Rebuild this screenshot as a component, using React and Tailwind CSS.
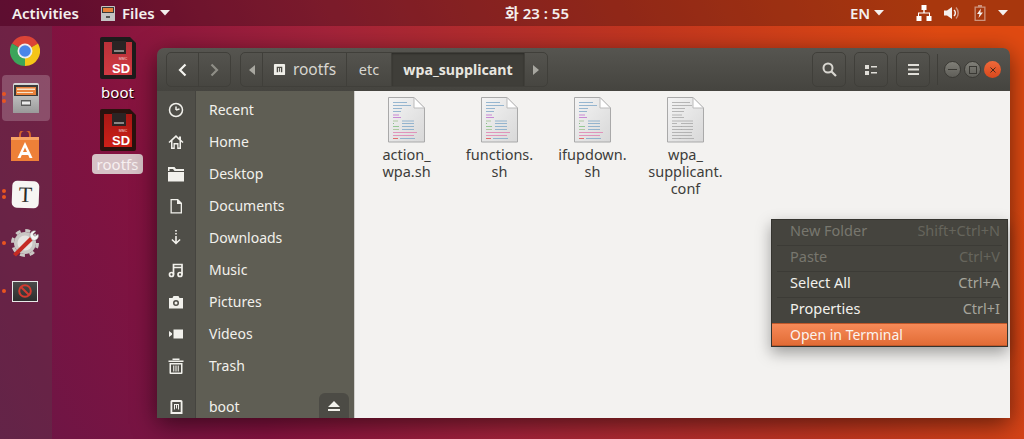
const FONT = "font-['Noto_Sans','Noto_Sans_CJK_KR',sans-serif]";

const Caret = ({ className = "" }) => (
  <svg width="10" height="6" viewBox="0 0 10 6" className={className}>
    <path d="M0 0h10L5 5.500z" fill="currentColor" />
  </svg>
);

const SdCard = ({ body, top, edge, id }) => (
  <svg width="36" height="42" viewBox="0 0 36 42">
    <defs>
      <linearGradient id={id} x1="0" y1="0" x2="0" y2="1">
        <stop offset="0" stopColor={top} />
        <stop offset="1" stopColor={body} />
      </linearGradient>
    </defs>
    <path d="M2 0h28l6 6v34a2 2 0 0 1-2 2H2a2 2 0 0 1-2-2V2a2 2 0 0 1 2-2z" fill={edge} />
    <path d="M4 5h28v33H4z" fill={`url(#${id})`} />
    <path d="M12 4h14v13H12z" fill="#2b2424" />
    <path d="M14 13h10v2H14z" fill="#8b8684" />
    <text x="23" y="23" textAnchor="middle" fontSize="3.500" fill="#f3dcdc" fontFamily="Liberation Sans">MMC</text>
    <text x="21" y="36" textAnchor="middle" fontSize="13" fontWeight="700" fill="#fff" fontFamily="Liberation Sans">SD</text>
  </svg>
);

const sideIcons = {
  recent: (
    <g fill="none" stroke="currentColor" strokeWidth="1.500">
      <circle cx="8" cy="8" r="6.500" />
      <path d="M8 8V4.500M8 8l3.500-1" />
    </g>
  ),
  home: (
    <path
      d="M8 1 .500 8l1 1L3 7.700V15h3.800v-4.500h2.400V15H13V7.700L14.500 9l1-1-2.500-2.300V2.500h-2v1.400zM4.500 6.500 8 3.200l3.500 3.300v7H10.500V9h-5v4.500h-1z"
      fill="currentColor"
      fillRule="evenodd"
    />
  ),
  desktop: (
    <g fill="currentColor">
      <path d="M0 1h6.500L8 3h8v2H6.500L5 3H1.500v2H0z" />
      <path d="M0 6h16v9.500H0z" />
    </g>
  ),
  documents: <path d="M2.500 1H10l4 4v10.500H2.500zM3.800 2.300v12h8.900V6H9V2.300z" fill="currentColor" fillRule="evenodd" />,
  downloads: (
    <g fill="currentColor">
      <path d="M7.200 0h1.600v1.600H7.200zM7.200 3h1.600v1.600H7.200zM7.200 6h1.600v5.500L11.600 9l1 1L8 14.500 3.400 10l1-1 2.800 2.500z" />
    </g>
  ),
  music: (
    <g fill="none" stroke="currentColor" strokeWidth="1.700">
      <circle cx="3.500" cy="12.500" r="2" />
      <circle cx="12" cy="12.500" r="2" />
      <path d="M5.500 12.500V2.500H14v10M5.500 5.500H14" />
    </g>
  ),
  pictures: (
    <path
      d="M5.500 2h5l1 2H15v10.500H1V4h3.500zM8 6a3 3 0 1 0 0 6 3 3 0 0 0 0-6zm0 1.500a1.500 1.500 0 1 1 0 3 1.500 1.500 0 0 1 0-3z"
      fill="currentColor"
      fillRule="evenodd"
    />
  ),
  videos: <path d="M5.500 3.500H15v9H5.500zM1 5v6l3-2.200V7.200z" fill="currentColor" />,
  trash: (
    <path
      d="M.500 2.500h15V4H.500zM4.500.500h7V2h-7zM1.500 5h13v10a1 1 0 0 1-1 1h-11a1 1 0 0 1-1-1zM3 6.500v8h10v-8zM5.200 7.500h1.100v6H5.200zM7.450 7.500h1.100v6h-1.100zM9.700 7.500h1.100v6H9.700z"
      fill="currentColor"
      fillRule="evenodd"
    />
  ),
};

const places = [
  { name: "Recent", icon: "recent" },
  { name: "Home", icon: "home" },
  { name: "Desktop", icon: "desktop" },
  { name: "Documents", icon: "documents" },
  { name: "Downloads", icon: "downloads" },
  { name: "Music", icon: "music" },
  { name: "Pictures", icon: "pictures" },
  { name: "Videos", icon: "videos" },
  { name: "Trash", icon: "trash" },
];

const menuItems = [
  { label: "New Folder", keys: "Shift+Ctrl+N", off: true },
  { label: "Paste", keys: "Ctrl+V", off: true },
  { label: "Select All", keys: "Ctrl+A" },
  { label: "Properties", keys: "Ctrl+I" },
];

const files = [
  { lines: ["action_", "wpa.sh"], code: true },
  { lines: ["functions.", "sh"], code: true },
  { lines: ["ifupdown.", "sh"], code: true },
  { lines: ["wpa_", "supplicant.", "conf"], code: false },
];

const FileIcon = ({ code }) => {
  const rows = [
    [5, 14, "#7fa8c8"], [8, 18, "#7fa8c8"], [11, 9, "#7fa8c8"], [14, 8, "#7fa8c8"],
    [17.500, 6, "#c070d0"], [20, 8, "#c070d0"],
    [23.500, 5, "#a0c090"], [26, 1, "#70b070"], [29, 6, "#80c080"], [32, 6, "#a0c090"],
    [35, 24, "#e080b0"], [38, 21, "#e080b0"], [41, 5, "#e05050"],
  ];
  return (
    <svg width="37" height="46" viewBox="0 0 37 46">
      <defs>
        <linearGradient id="sheet" x1="0" y1="0" x2="1" y2="1">
          <stop offset="0" stopColor="#f4f4f4" />
          <stop offset="1" stopColor="#d8d8d8" />
        </linearGradient>
      </defs>
      <path d="M.500.500H26L36.500 11v34H.500z" fill="url(#sheet)" stroke="#a9a9a9" />
      <path d="M26 .500V11h10.500z" fill="#fff" stroke="#bbb" />
      {rows.map(([y, w, c]) => (
        <rect key={y} x="5" y={y} width={code ? w : Math.min(w + 4, 20)} height="1" opacity="0.8" fill={code ? c : "#a8a8a8"} />
      ))}
      {rows.slice(6, 10).map(([y]) => (
        <rect key={y} x="14" y={y} width="12" height="1" opacity="0.8" fill={code ? "#7fa8c8" : "#a8a8a8"} />
      ))}
      <rect x="12" y="41" width="15" height="1" opacity="0.8" fill={code ? "#7fa8c8" : "#a8a8a8"} />
    </svg>
  );
};

const Dot = ({ top }) => (
  <span className={`absolute left-[2px] w-[4px] h-[4px] rounded-full bg-[#e95420] ${top}`} />
);

const Dock = () => (
  <div className="w-[52px] shrink-0 bg-[#5a3a4a]/40">
    {/* Chrome */}
    <div className="h-[49px] flex items-center justify-center pr-[2px]">
      <svg width="30" height="30" viewBox="0 0 30 30">
        <path d="M15 15 2 7.500A15 15 0 0 1 28 7.500z" fill="#db4437" />
        <path d="M15 15 28 7.500A15 15 0 0 1 15 30z" fill="#f5c518" />
        <path d="M15 15 15 30A15 15 0 0 1 2 7.500z" fill="#3ba55a" />
        <circle cx="15" cy="15" r="7.500" fill="#eee" />
        <circle cx="15" cy="15" r="5.800" fill="#4a86e8" />
      </svg>
    </div>
    {/* Files, running */}
    <div className="mx-[2px] h-[46px] rounded-[4px] bg-white/20 flex items-center justify-center relative">
      <span className="absolute left-0 top-[17px] w-[4px] h-[4px] rounded-full bg-[#e95420]" />
      <span className="absolute left-0 top-[24px] w-[4px] h-[4px] rounded-full bg-[#e95420]" />
      <svg width="28" height="31" viewBox="0 0 28 31">
        <defs>
          <linearGradient id="cab" x1="0" y1="0" x2="0" y2="1">
            <stop offset="0" stopColor="#d8d8d8" />
            <stop offset="1" stopColor="#9a9a9a" />
          </linearGradient>
        </defs>
        <path d="M1 2a2 2 0 0 1 2-2h22a2 2 0 0 1 2 2v28H1z" fill="url(#cab)" />
        <path d="M2 2h24v11H2z" fill="#3a3a3a" />
        <path d="M4 4h20v8H4z" fill="#e8823c" />
        <path d="M5 5.500h18v1.500H5zM5 9h16v1H5z" fill="#f8e2c8" />
        <path d="M9 17h10v6H9z" fill="#5c5c5c" />
        <path d="M10 18.500h8v3h-8z" fill="#ececec" />
      </svg>
    </div>
    {/* Software */}
    <div className="h-[49px] flex items-center justify-center pr-[2px]">
      <svg width="28" height="30" viewBox="0 0 28 30">
        <path d="M9 7V4a5 5 0 0 1 10 0v3" fill="none" stroke="#d4622a" strokeWidth="2" />
        <path d="M0 6h28v24H0z" fill="#ee8038" />
        <path d="M0 6h28v3H0z" fill="#f7a365" />
        <path d="M14 11 6.500 27h3l1.300-3h6.400l1.300 3h3zm0 5.500 2 4.500h-4z" fill="#fff" fillRule="evenodd" />
      </svg>
    </div>
    {/* Typora */}
    <div className="h-[49px] flex items-center justify-center relative pr-[2px]">
      <Dot top="top-[19px]" />
      <Dot top="top-[25px]" />
      <div className="w-[27px] h-[27px] rounded-[5px] bg-[#f7f5f3] rotate-[2deg] flex items-center justify-center font-['Liberation_Serif',serif] text-[22px] leading-none text-[#2a2a2a]">
        T
      </div>
    </div>
    {/* Tools */}
    <div className="h-[48px] flex items-center justify-center relative pr-[2px]">
      <Dot top="top-[22px]" />
      <svg width="28" height="28" viewBox="0 0 28 28">
        <circle cx="14" cy="14" r="11" fill="#c9c7c4" />
        <circle cx="14" cy="14" r="12.500" fill="none" stroke="#c9c7c4" strokeWidth="3" strokeDasharray="5 4.800" />
        <circle cx="14" cy="14" r="7.500" fill="#e6e4e1" />
        <path d="M2 25 19 8l3 3L5 27.500z" fill="#c42b23" />
        <path d="M19 7a4.500 4.500 0 0 1 6-5l-3 3 1 2 2 0 2-2a4.500 4.500 0 0 1-6 6z" fill="#f6f6f6" stroke="#8a8a8a" strokeWidth="0.500" />
      </svg>
    </div>
    {/* Disabled screen */}
    <div className="h-[48px] flex items-center justify-center relative pr-[2px]">
      <Dot top="top-[22px]" />
      <div className="w-[26px] h-[21px] border border-[#e8e8e8] bg-[linear-gradient(#4a4a4a,#2e2e2e)] flex items-center justify-center">
        <svg width="14" height="14" viewBox="0 0 14 14">
          <circle cx="7" cy="7" r="5.800" fill="none" stroke="#d23a30" strokeWidth="2" />
          <path d="M3 3l8 8" stroke="#d23a30" strokeWidth="2" />
        </svg>
      </div>
    </div>
  </div>
);

const TopBar = () => (
  <div className="h-[26px] shrink-0 bg-black/25 flex items-center text-[15px] font-semibold text-[#f4f0ee]">
    <span className="ml-[12px] w-[88px]">Activities</span>
    <svg width="14" height="15" viewBox="0 0 14 15" className="ml-[1px]">
      <path d="M0 1a1 1 0 0 1 1-1h12a1 1 0 0 1 1 1v14H0z" fill="#c4c4c4" />
      <path d="M1 1h12v6H1z" fill="#3a3a3a" />
      <path d="M2 2h10v4H2z" fill="#e8823c" />
      <path d="M5 10h4v2H5z" fill="#555" />
    </svg>
    <span className="ml-[7px] w-[33px]">Files</span>
    <Caret className="ml-[5px]" />
    <span className="ml-[335px] w-[69px]">화 23 : 55</span>
    <span className="ml-[276px] w-[20px]">EN</span>
    <Caret className="ml-[4px]" />
    <svg width="16" height="16" viewBox="0 0 16 16" className="ml-[32px]">
      <path d="M5.500 0h5v5H8.700v2.500H14V11h1.500v5h-5v-5H13V8.500H3V11h2.500v5h-5v-5H2V7.500h5.300V5H5.500z" fill="#fff" />
    </svg>
    <svg width="16" height="14" viewBox="0 0 16 14" className="ml-[12px]">
      <path d="M0 4.500h3L8 1v12L3 9.500H0z" fill="#f4f0ee" />
      <path d="M10 4a4 4 0 0 1 0 6" fill="none" stroke="#f4f0ee" strokeWidth="1.500" />
      <path d="M12 1.500a8 8 0 0 1 0 11" fill="none" stroke="#f4f0ee" strokeOpacity="0.5" strokeWidth="1.500" />
    </svg>
    <svg width="12" height="16" viewBox="0 0 12 16" className="ml-[14px]">
      <path d="M4 0h4v1.500h3.500V16H.500V1.500H4zM1.800 2.800v12h8.400v-12z" fill="#f4f0ee" fillOpacity="0.5" fillRule="evenodd" />
      <path d="M7 3.500 3 9h2.500L4.500 13 9 7.500H6.300z" fill="#f4f0ee" />
    </svg>
    <Caret className="ml-[12px]" />
  </div>
);

const HeaderBtn = ({ className = "", children }) => (
  <div className={`h-[35px] flex items-center justify-center border border-[#403f3a] ${className}`}>
    {children}
  </div>
);

const WindowHeader = () => (
  <div className="h-[43px] shrink-0 rounded-t-[7px] bg-[linear-gradient(#565550,#45443f)] flex items-center pl-[9px] text-[14.500px] text-[#d8d6d0]">
    <HeaderBtn className="w-[33px] rounded-l-[5px]">
      <svg width="9" height="14" viewBox="0 0 9 14">
        <path d="M7.500 1.500 2 7l5.500 5.500" fill="none" stroke="#f5f4f0" strokeWidth="2.200" />
      </svg>
    </HeaderBtn>
    <HeaderBtn className="w-[33px] -ml-px rounded-r-[5px]">
      <svg width="9" height="14" viewBox="0 0 9 14">
        <path d="M1.500 1.500 7 7l-5.500 5.500" fill="none" stroke="#8f8e87" strokeWidth="2.200" />
      </svg>
    </HeaderBtn>
    <HeaderBtn className="w-[23px] ml-[9px] rounded-l-[5px] text-[#a8a7a0]">
      <svg width="6" height="10" viewBox="0 0 6 10">
        <path d="M6 0v10L0 5z" fill="currentColor" />
      </svg>
    </HeaderBtn>
    <HeaderBtn className="w-[85px] -ml-px gap-[7px] text-[15.500px]">
      <svg width="13" height="13" viewBox="0 0 14 14">
        <path d="M2 1h10a1 1 0 0 1 1 1v10a1 1 0 0 1-1 1H2a1 1 0 0 1-1-1V2a1 1 0 0 1 1-1z" fill="#f0efe9" />
        <path d="M4 4h6v6H8.500V5.500h-1v4h-1v-4h-1V10H4z" fill="#4d4c46" />
      </svg>
      rootfs
    </HeaderBtn>
    <HeaderBtn className="w-[46px] -ml-px">etc</HeaderBtn>
    <HeaderBtn className="w-[134px] -ml-px bg-[#3f3e39] text-[14.200px] font-bold text-[#e8e6e0] shadow-[inset_0_1px_2px_rgba(0,0,0,0.3)]">
      wpa_supplicant
    </HeaderBtn>
    <HeaderBtn className="w-[24px] -ml-px rounded-r-[5px] text-[#a8a7a0]">
      <svg width="6" height="10" viewBox="0 0 6 10">
        <path d="M0 0v10l6-5z" fill="currentColor" />
      </svg>
    </HeaderBtn>
    <HeaderBtn className="w-[34px] ml-[264px] rounded-[5px]">
      <svg width="15" height="15" viewBox="0 0 15 15">
        <circle cx="6" cy="6" r="4.500" fill="none" stroke="#d8d6d0" strokeWidth="2" />
        <path d="M9.500 9.500 14 14" stroke="#d8d6d0" strokeWidth="2.200" />
      </svg>
    </HeaderBtn>
    <HeaderBtn className="w-[34px] ml-[8px] rounded-[5px]">
      <svg width="12" height="10" viewBox="0 0 12 10">
        <path d="M0 0h4v4H0zM0 6h4v4H0zM6 1h6v1.500H6zM6 7h6v1.500H6z" fill="#e0ded8" />
      </svg>
    </HeaderBtn>
    <HeaderBtn className="w-[34px] ml-[8px] rounded-[5px]">
      <svg width="11" height="11" viewBox="0 0 11 11">
        <path d="M0 0h11v2H0zM0 4.500h11v2H0zM0 9h11v2H0z" fill="#e0ded8" />
      </svg>
    </HeaderBtn>
    <div className="ml-[7px] w-px h-[31px] bg-[#3f3e39]" />
    <div className="ml-[6px] flex gap-[3px]">
      <div className="w-[17px] h-[17px] rounded-full bg-[linear-gradient(#807f78,#5f5e58)] border border-[#3a3934] flex items-center justify-center">
        <div className="w-[9px] h-px bg-[#3a3934]" />
      </div>
      <div className="w-[17px] h-[17px] rounded-full bg-[linear-gradient(#807f78,#5f5e58)] border border-[#3a3934] flex items-center justify-center">
        <div className="w-[8px] h-[8px] border border-[#3a3934]" />
      </div>
      <div className="w-[17px] h-[17px] rounded-full bg-[linear-gradient(#f0693a,#d8481c)] flex items-center justify-center">
        <svg width="6" height="6" viewBox="0 0 6 6">
          <path d="M.500.500l5 5M5.500.500l-5 5" stroke="#4a2a1a" strokeWidth="1" />
        </svg>
      </div>
    </div>
  </div>
);

const BootIcon = () => (
  <svg width="13" height="14" viewBox="0 0 13 14">
    <path d="M2 0h9a1.500 1.500 0 0 1 1.500 1.500V14H.500V1.500A1.500 1.500 0 0 1 2 0z" fill="#f2f1ec" />
    <path d="M2.300 2h8.400v10H2.300z" fill="#4f4e48" />
    <path d="M4 4h5v5.500H8V5H7v3.500H6V5H5v4.500H4z" fill="#f2f1ec" />
  </svg>
);

const Sidebar = () => (
  <div className="w-[197px] shrink-0 flex text-[14px] text-[#f2f1ec]">
    <div className="w-[39px] shrink-0 bg-[#4f4e48] border-r border-[#45443f] pt-[3px]">
      {places.map((p) => (
        <div key={p.name} className="h-[32px] flex items-center justify-center text-[#f2f1ec]">
          <svg width="16" height="16" viewBox="0 0 16 16">
            {sideIcons[p.icon]}
          </svg>
        </div>
      ))}
      <div className="h-[9px]" />
      <div className="h-[32px] flex items-center justify-center">
        <BootIcon />
      </div>
    </div>
    <div className="flex-1 bg-[#5f5e54] pt-[2px] relative">
      {places.map((p) => (
        <div key={p.name} className="h-[32px] flex items-center pl-[13px]">
          {p.name}
        </div>
      ))}
      <div className="h-[9px]" />
      <div className="h-[32px] flex items-center pl-[13px]">boot</div>
      <div className="absolute left-[123px] top-[302px] w-[30px] h-[30px] rounded-[6px] bg-[#4c4b45] flex items-center justify-center">
        <svg width="12" height="10" viewBox="0 0 12 10" className="-mt-[5px]">
          <path d="M6 0l6 6H0zM0 8h12v2H0z" fill="#f2f1ec" />
        </svg>
      </div>
    </div>
  </div>
);

const ContextMenu = () => (
  <div className="absolute left-[614px] top-[171px] w-[237px] bg-[#45443e] border border-[#35342f] shadow-[0_6px_14px_rgba(0,0,0,0.35)] text-[14.500px]">
    {menuItems.map((m) => (
      <div key={m.label} className="h-[26px] pb-[3px] mx-[5px] border-b border-[#3c3b36] flex items-center justify-between pl-[13px] pr-[2px]">
        <span className={m.off ? "text-[#78776e]" : "text-[#f2f1ec]"}>{m.label}</span>
        <span className={m.off ? "text-[#66655c]" : "text-[#a5a49b]"}>{m.keys}</span>
      </div>
    ))}
    <div className="h-[23px] -mt-px bg-[linear-gradient(#f68a58,#e26c36)] border-y border-[#c0582a] flex items-center pl-[18px] text-[14px] text-[#fbf3ee]">
      Open in Terminal
    </div>
  </div>
);

const FileView = () => (
  <div className="flex-1 bg-[#f3f2f0] border-l border-[#d0cfcc] grid grid-cols-[repeat(4,93px)] content-start pl-[5px] pt-[6px] text-[14.500px] leading-[17px] text-[#3d3d3a]">
    {files.map((f) => (
      <div key={f.lines[0]} className="flex flex-col items-center">
        <FileIcon code={f.code} />
        <div className="mt-[3px] text-center">
          {f.lines.map((l) => (
            <div key={l}>{l}</div>
          ))}
        </div>
      </div>
    ))}
  </div>
);

export default function App() {
  return (
    <div
      className={`w-[1024px] h-[439px] overflow-hidden flex flex-col ${FONT} bg-[linear-gradient(65deg,#6a1646_0%,#84123f_22%,#a3233a_42%,#c2361f_68%,#e04a12_92%)]`}
    >
      <TopBar />
      <div className="flex-1 flex min-h-0">
        <Dock />
        <div className="flex-1 relative">
          {/* Desktop icons */}
          <div className="absolute left-[40px] top-[11px] w-[51px] flex flex-col items-center text-[15px] text-white">
            <SdCard id="sd1" body="#d03a42" top="#b93139" edge="#1d1b1b" />
            <span className="mt-[3px] leading-[20px] [text-shadow:1px_1px_1px_#000]">boot</span>
            <div className="mt-[7px]">
              <SdCard id="sd2" body="#cc2018" top="#a81815" edge="#2a120e" />
            </div>
            <span className="mt-[3px] w-[51px] h-[20px] leading-[20px] text-center rounded-[4px] bg-[#d6c2c6] text-[#f7f0f1]">
              rootfs
            </span>
          </div>

          {/* Nautilus window */}
          <div className="absolute left-[105px] top-[22px] w-[853px] h-[370px] flex flex-col rounded-t-[7px] shadow-[0_6px_24px_rgba(0,0,0,0.55)]">
            <WindowHeader />
            <div className="flex-1 flex min-h-0 overflow-hidden">
              <Sidebar />
              <FileView />
            </div>
            <ContextMenu />
          </div>
        </div>
      </div>
    </div>
  );
}
